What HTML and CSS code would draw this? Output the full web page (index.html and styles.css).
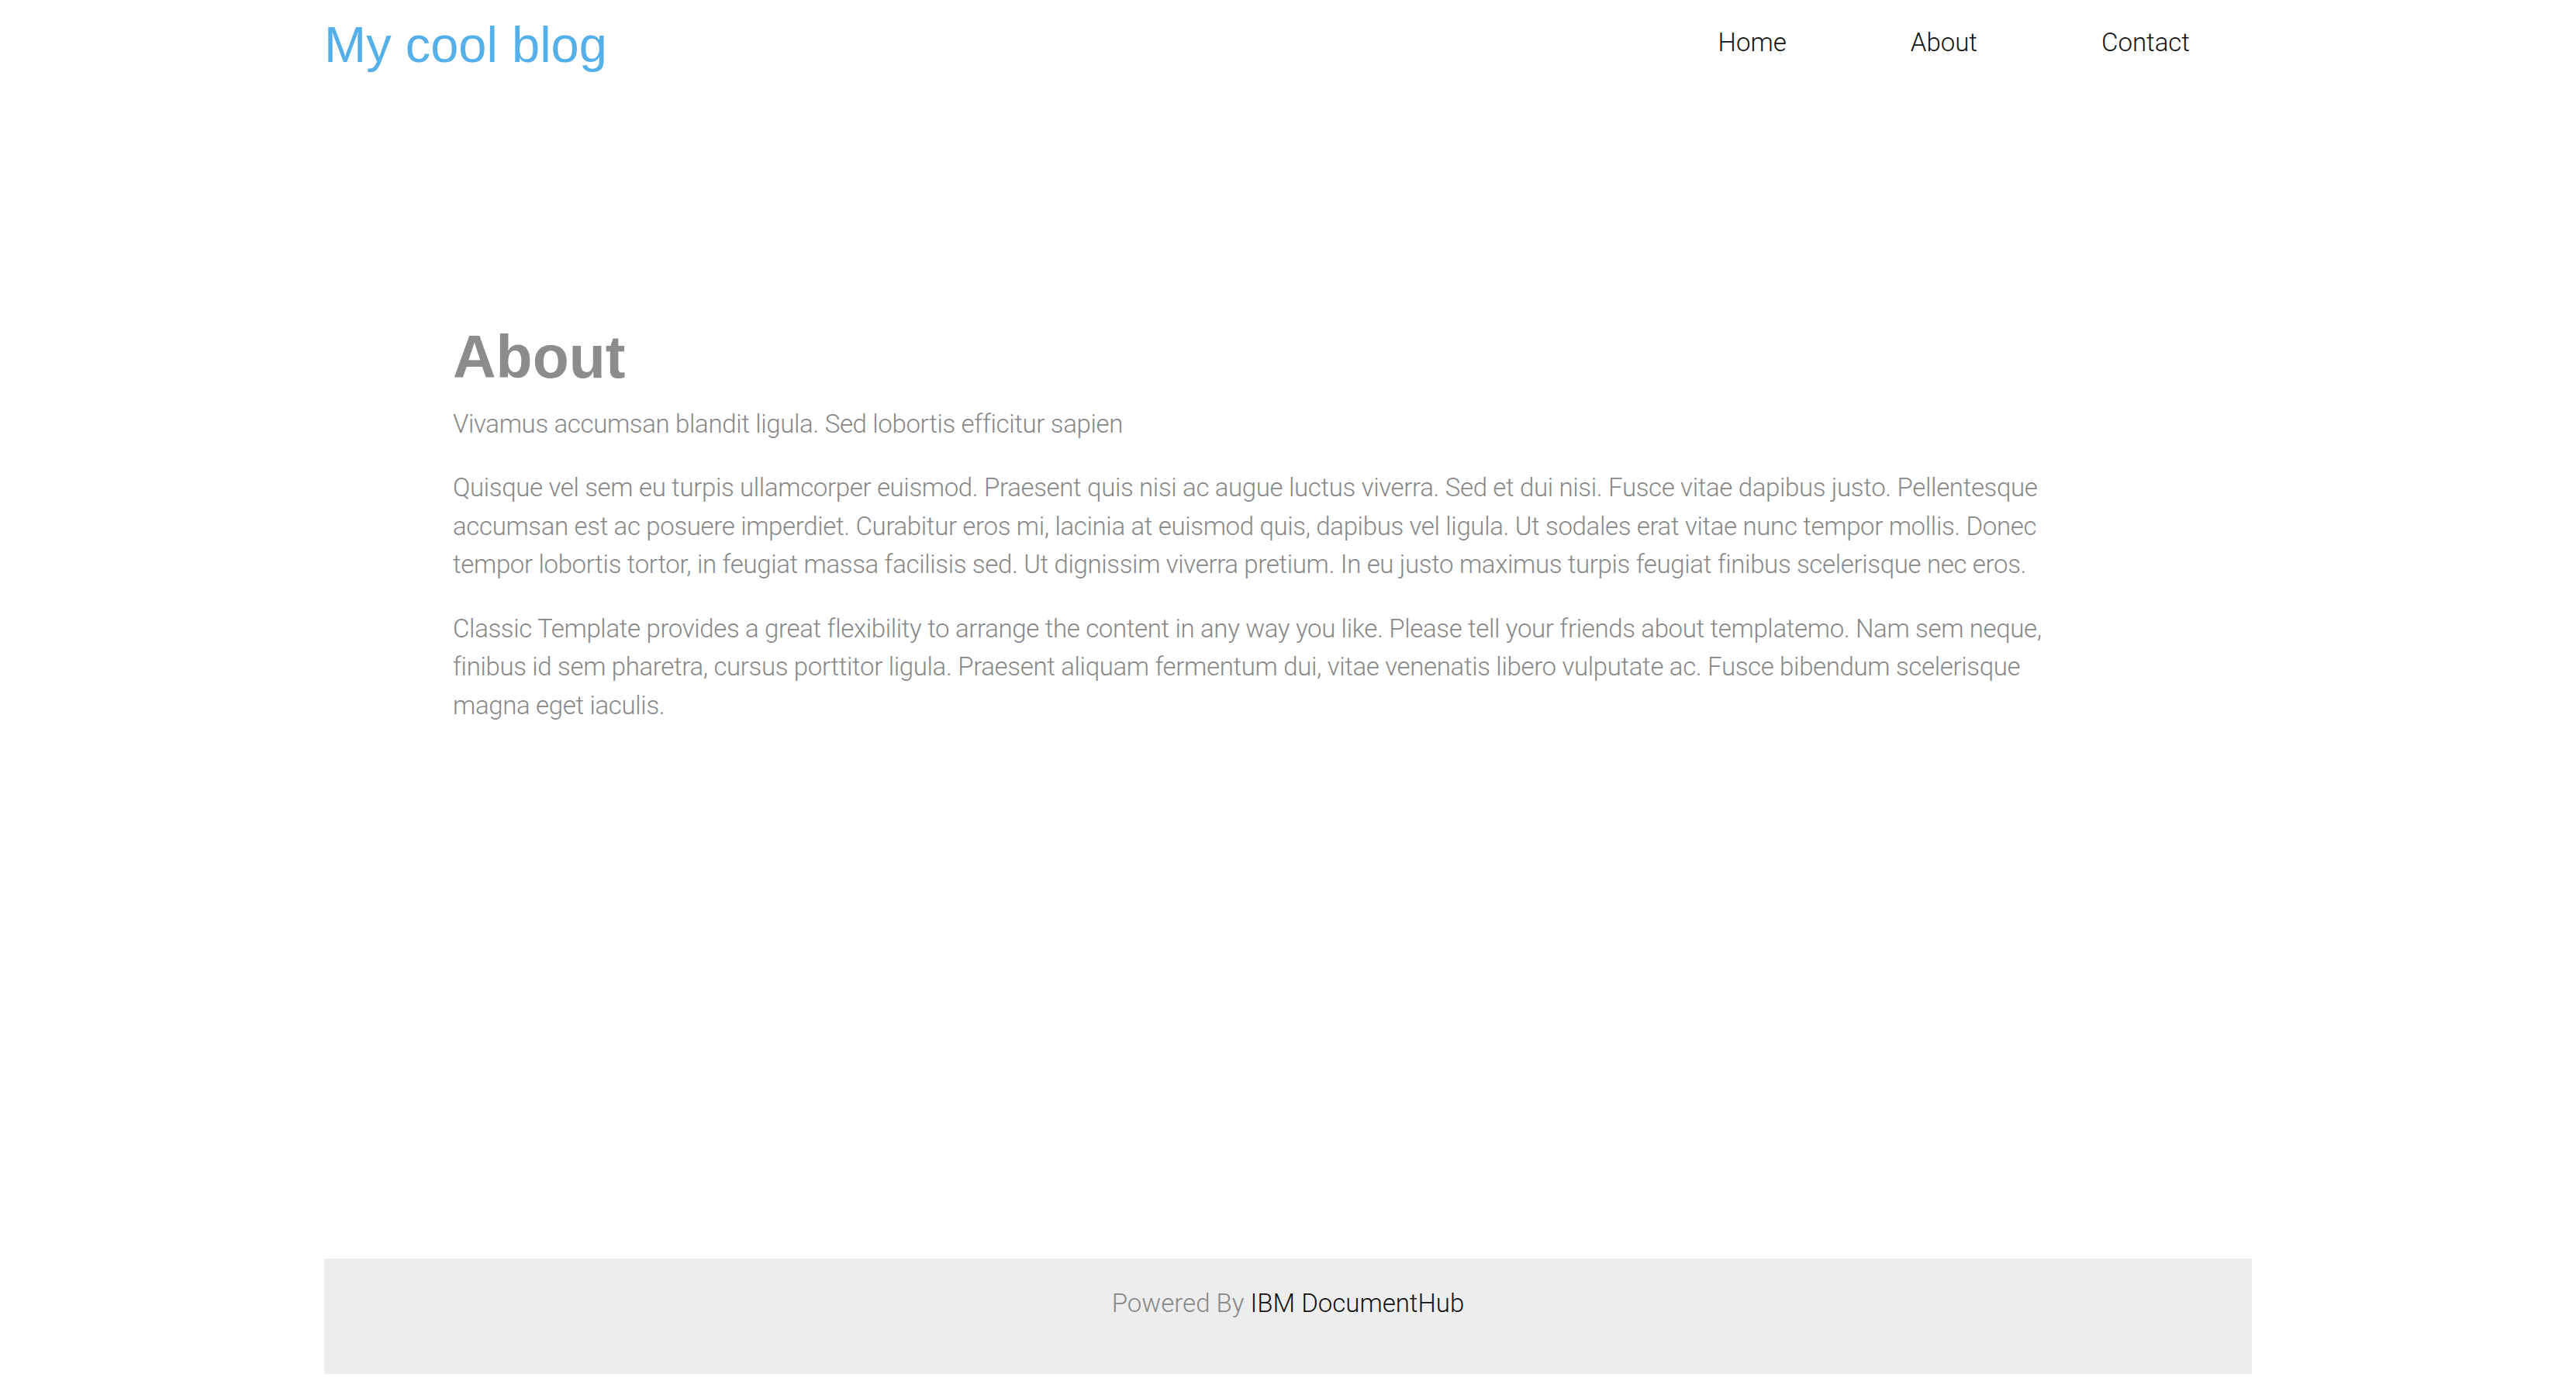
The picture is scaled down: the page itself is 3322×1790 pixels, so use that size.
FILE: index.html
```html
<!DOCTYPE html>
<html lang="en">
<head>
<meta charset="utf-8">
<title>My cool blog</title>
<link rel="stylesheet" href="styles.css">
</head>
<body>
<div class="page">
  <header class="site-header">
    <a class="brand" href="#">My cool blog</a>
    <nav class="nav">
      <a href="#">Home</a>
      <a href="#">About</a>
      <a href="#">Contact</a>
    </nav>
  </header>
  <main class="content">
    <h1 class="title">About</h1>
    <p class="lead">Vivamus accumsan blandit ligula. Sed lobortis efficitur sapien</p>
    <p class="text">Quisque vel sem eu turpis ullamcorper euismod. Praesent quis nisi ac augue luctus viverra. Sed et dui nisi. Fusce vitae dapibus justo. Pellentesque accumsan est ac posuere imperdiet. Curabitur eros mi, lacinia at euismod quis, dapibus vel ligula. Ut sodales erat vitae nunc tempor mollis. Donec tempor lobortis tortor, in feugiat massa facilisis sed. Ut dignissim viverra pretium. In eu justo maximus turpis feugiat finibus scelerisque nec eros.</p>
    <p class="text">Classic Template provides a great flexibility to arrange the content in any way you like. Please tell your friends about templatemo. Nam sem neque, finibus id sem pharetra, cursus porttitor ligula. Praesent aliquam fermentum dui, vitae venenatis libero vulputate ac. Fusce bibendum scelerisque magna eget iaculis.</p>
  </main>
  <footer class="site-footer">
    <p class="footer-text">Powered By <a class="footer-link" href="#">IBM DocumentHub</a></p>
  </footer>
</div>
</body>
</html>
```
FILE: styles.css
```css
html, body {
  margin: 0;
  padding: 0;
  background: #ffffff;
}

body {
  font-family: Roboto, "Liberation Sans", sans-serif;
  font-weight: 300;
  font-size: 33px;
  line-height: 49.5px;
  color: #888888;
}

.page {
  display: flex;
  flex-direction: column;
  min-height: 100vh;
}

.site-header {
  width: 2486px;
  margin: 0 auto;
  height: 110px;
  display: flex;
  justify-content: space-between;
  align-items: flex-start;
}

.brand {
  margin-top: 22px;
  font-family: "Liberation Sans", Arial, sans-serif;
  font-weight: 400;
  font-size: 65px;
  line-height: 71.5px;
  color: #55b0ea;
  text-decoration: none;
}

.nav {
  display: flex;
  margin-top: 30px;
}

.nav a {
  padding: 0 80px;
  font-weight: 300;
  font-size: 33px;
  line-height: 49.5px;
  color: #111111;
  text-decoration: none;
}

.content {
  flex: 1;
  width: 2154px;
  margin: 0 auto;
  padding-top: 308px;
  box-sizing: border-box;
}

.title {
  margin: 0 0 18px;
  font-family: "Liberation Sans", Arial, sans-serif;
  font-weight: 700;
  font-size: 77px;
  line-height: 85.8px;
  color: #8c8c8c;
}

.lead {
  margin: 0 0 33px;
  letter-spacing: -0.35px;
}

.text {
  max-width: 2127px;
  margin: 0 0 33px;
  letter-spacing: -0.35px;
}

.site-footer {
  width: 2486px;
  margin: 0 auto 18px;
  background: #ededed;
  text-align: center;
  padding: 33px 0 67px;
  box-sizing: border-box;
}

.footer-text {
  margin: 0;
  color: #888888;
}

.footer-link {
  color: #111111;
  text-decoration: none;
}
```
